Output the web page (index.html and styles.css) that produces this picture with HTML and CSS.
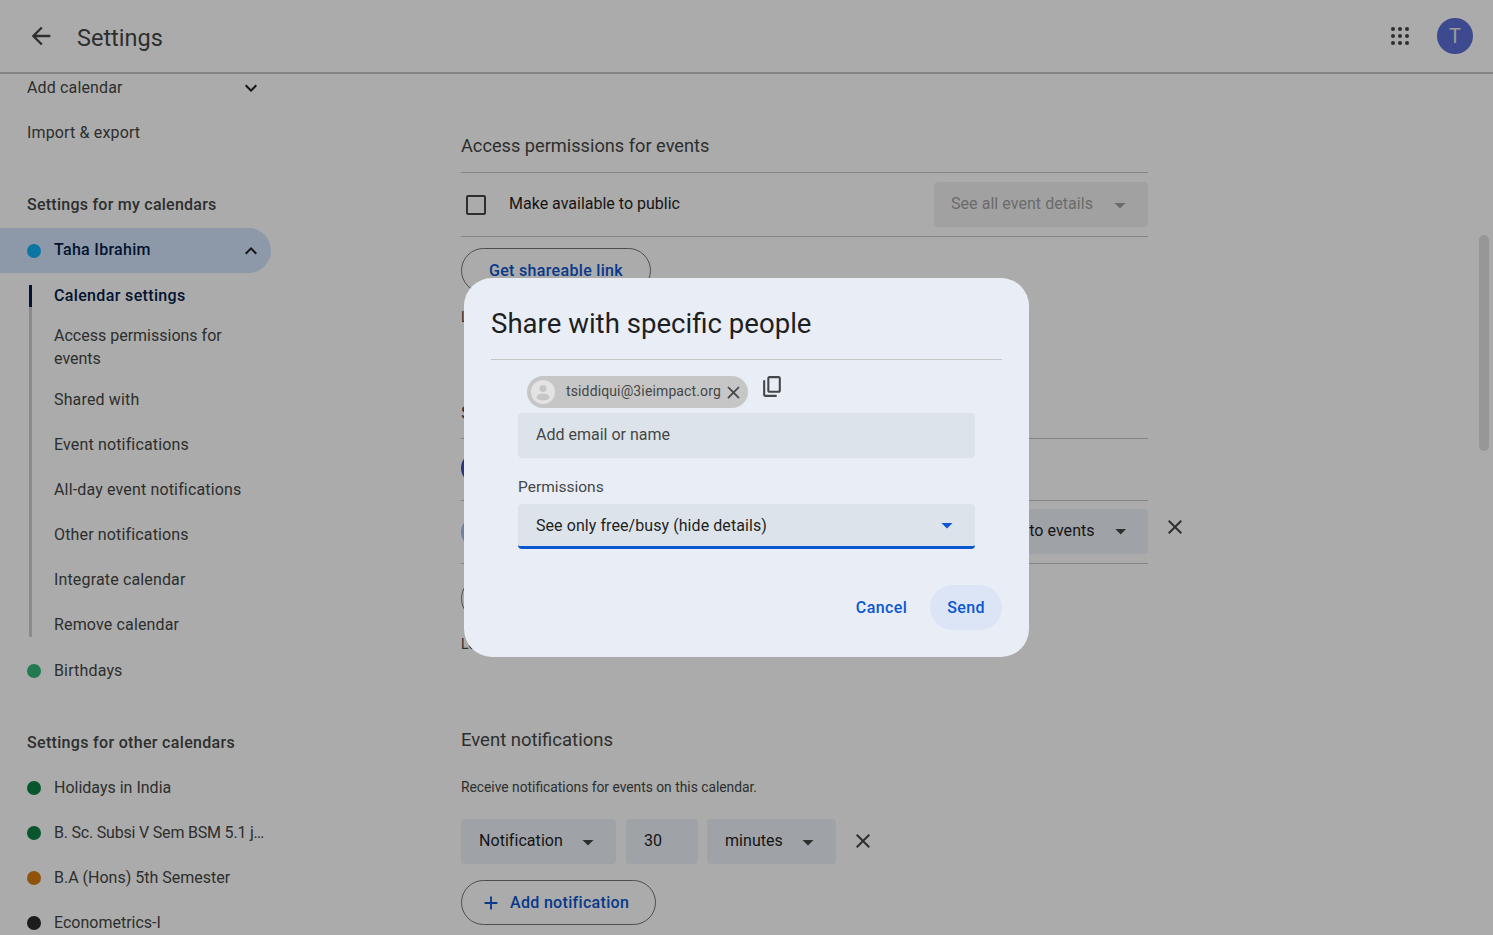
FILE: index.html
```html
<!DOCTYPE html>
<html lang="en">
<head>
    <meta charset="UTF-8">
    <meta name="viewport" content="width=device-width, initial-scale=1.0">
    <title>Settings</title>
    <link rel="stylesheet" href="styles.css">
</head>
<body>
    <svg class="icon-defs" aria-hidden="true">
        <symbol id="i-close" viewBox="0 0 24 24"><path d="M19 6.41 17.59 5 12 10.59 6.41 5 5 6.41 10.59 12 5 17.59 6.41 19 12 13.41 17.59 19 19 17.59 13.41 12z"/></symbol>
        <symbol id="i-down" viewBox="0 0 24 24"><path d="M7.41 8.59 12 13.17l4.59-4.58L18 10l-6 6-6-6z"/></symbol>
        <symbol id="i-up" viewBox="0 0 24 24"><path d="M7.41 15.41 12 10.83l4.59 4.58L18 14l-6-6-6 6z"/></symbol>
        <symbol id="i-caret" viewBox="0 0 24 24"><path d="M6.5 10h11L12 15.5z"/></symbol>
    </svg>

    <header class="topbar">
        <svg class="back-icon" viewBox="0 0 24 24"><path d="M20 11H7.83l5.59-5.59L12 4l-8 8 8 8 1.41-1.41L7.83 13H20v-2z"/></svg>
        <h1 class="topbar-title">Settings</h1>
        <svg class="apps-icon" viewBox="0 0 20 20">
            <circle cx="3" cy="3" r="2"/><circle cx="10" cy="3" r="2"/><circle cx="17" cy="3" r="2"/>
            <circle cx="3" cy="10" r="2"/><circle cx="10" cy="10" r="2"/><circle cx="17" cy="10" r="2"/>
            <circle cx="3" cy="17" r="2"/><circle cx="10" cy="17" r="2"/><circle cx="17" cy="17" r="2"/>
        </svg>
        <div class="avatar">T</div>
    </header>

    <div class="page">
        <nav class="sidebar">
            <div class="nav-row">Add calendar <svg class="chevron"><use href="#i-down"/></svg></div>
            <div class="nav-row">Import &amp; export</div>

            <h3 class="nav-heading">Settings for my calendars</h3>
            <div class="nav-row cal-row selected">
                <span class="dot dot-blue"></span>Taha Ibrahim
                <svg class="chevron"><use href="#i-up"/></svg>
            </div>
            <ul class="subnav">
                <li class="subnav-item active">Calendar settings</li>
                <li class="subnav-item tall">Access permissions for events</li>
                <li class="subnav-item">Shared with</li>
                <li class="subnav-item">Event notifications</li>
                <li class="subnav-item">All-day event notifications</li>
                <li class="subnav-item">Other notifications</li>
                <li class="subnav-item">Integrate calendar</li>
                <li class="subnav-item">Remove calendar</li>
            </ul>
            <div class="nav-row cal-row"><span class="dot dot-green"></span>Birthdays</div>

            <h3 class="nav-heading other">Settings for other calendars</h3>
            <div class="other-list">
                <div class="nav-row cal-row"><span class="dot dot-dark-green"></span>Holidays in India</div>
                <div class="nav-row cal-row tight"><span class="dot dot-dark-green"></span>B. Sc. Subsi V Sem BSM 5.1 j…</div>
                <div class="nav-row cal-row"><span class="dot dot-orange"></span>B.A (Hons) 5th Semester</div>
                <div class="nav-row cal-row"><span class="dot dot-black"></span>Econometrics-I</div>
            </div>
        </nav>

        <main class="content">
            <h2 class="section-title first">Access permissions for events</h2>
            <div class="setting-row">
                <span class="checkbox"></span>
                <span class="setting-label">Make available to public</span>
                <div class="select disabled wide">See all event details <svg class="caret"><use href="#i-caret"/></svg></div>
            </div>
            <button class="outline-btn share-btn">Get shareable link</button>
            <p class="help-text share-help">Learn how to share your calendar with others</p>

            <h2 class="section-title shared-title">Share with specific people or groups</h2>
            <div class="setting-row person-row owner">
                <span class="person-dot"></span>
                <span class="setting-label">Taha Ibrahim</span>
            </div>
            <div class="setting-row person-row">
                <span class="person-dot light"></span>
                <span class="setting-label">tsiddiqui@3ieimpact.org</span>
                <div class="select person-select">Make changes to events <svg class="caret"><use href="#i-caret"/></svg></div>
                <svg class="row-close outside"><use href="#i-close"/></svg>
            </div>
            <button class="outline-btn people-btn">Add people and groups</button>
            <p class="help-text people-help">Learn more about sharing your calendar</p>

            <h2 class="section-title notif-title">Event notifications</h2>
            <p class="help-text notif-help">Receive notifications for events on this calendar.</p>
            <div class="notif-row">
                <div class="select notif-type">Notification <svg class="caret"><use href="#i-caret"/></svg></div>
                <div class="select notif-num">30</div>
                <div class="select notif-unit">minutes <svg class="caret"><use href="#i-caret"/></svg></div>
                <svg class="row-close"><use href="#i-close"/></svg>
            </div>
            <button class="outline-btn add-btn">
                <svg class="add-icon" viewBox="0 0 24 24"><path d="M19 13h-6v6h-2v-6H5v-2h6V5h2v6h6v2z"/></svg>
                Add notification
            </button>
        </main>
    </div>

    <div class="scrollbar-thumb"></div>

    <div class="scrim">
        <div class="dialog">
            <h2 class="dialog-title">Share with specific people</h2>
            <div class="dialog-body">
                <div class="chip-row">
                    <div class="chip">
                        <span class="chip-avatar">
                            <svg viewBox="0 0 24 24"><circle cx="12" cy="8.5" r="3.6"/><ellipse cx="12" cy="17" rx="6.5" ry="3.6"/></svg>
                        </span>
                        <span class="chip-text">tsiddiqui@3ieimpact.org</span>
                        <svg class="chip-close"><use href="#i-close"/></svg>
                    </div>
                    <svg class="copy-icon" viewBox="0 0 24 24"><path d="M9 18c-.55 0-1.02-.2-1.41-.59C7.2 17.02 7 16.55 7 16V4c0-.55.2-1.02.59-1.41C7.98 2.2 8.45 2 9 2h9c.55 0 1.02.2 1.41.59.39.39.59.86.59 1.41v12c0 .55-.2 1.02-.59 1.41-.39.39-.86.59-1.41.59H9zm0-2h9V4H9v12zm-4 6c-.55 0-1.02-.2-1.41-.59C3.2 21.02 3 20.55 3 20V6h2v14h11v2H5z"/></svg>
                </div>
                <div class="field">Add email or name</div>
                <div class="field-label">Permissions</div>
                <div class="field field-select">
                    See only free/busy (hide details)
                    <svg class="caret"><use href="#i-caret"/></svg>
                </div>
            </div>
            <div class="dialog-actions">
                <button class="text-btn">Cancel</button>
                <button class="text-btn send">Send</button>
            </div>
        </div>
    </div>
</body>
</html>
```

FILE: styles.css
```css
* {
    margin: 0;
    padding: 0;
    box-sizing: border-box;
}

html, body {
    height: 100%;
    overflow: hidden;
}

body {
    font-family: Roboto, "Noto Sans", Arial, sans-serif;
    font-size: 16px;
    color: #1f1f1f;
    background-color: #ffffff;
}

button {
    font: inherit;
    background: none;
    border: none;
}

.icon-defs {
    display: none;
}

/* Top bar */
.topbar {
    display: flex;
    align-items: center;
    height: 74px;
    padding: 0 20px 0 27px;
    border-bottom: 2px solid #c4c4c4;
    background-color: #ffffff;
    position: relative;
    z-index: 1;
}

.back-icon {
    width: 28px;
    height: 28px;
    fill: #444746;
}

.topbar-title {
    margin-left: 22px;
    margin-top: 3px;
    font-size: 23.5px;
    font-weight: 400;
    color: #444746;
    flex: 1;
}

.apps-icon {
    width: 20px;
    height: 20px;
    margin-right: 27px;
    fill: #444746;
}

.avatar {
    width: 36px;
    height: 36px;
    border-radius: 50%;
    background-color: #5b6fd6;
    color: #e8e8e8;
    font-size: 20px;
    display: flex;
    align-items: center;
    justify-content: center;
}

/* Layout */
.page {
    display: grid;
    grid-template-columns: 461px 687px;
    height: 861px;
    overflow: hidden;
}

/* Sidebar */
.sidebar {
    width: 271px;
    margin-top: -9px;
    color: #444746;
    letter-spacing: 0.15px;
}

.nav-row {
    display: flex;
    align-items: center;
    height: 45px;
    padding-left: 27px;
    position: relative;
    white-space: nowrap;
}

.nav-heading {
    font-size: 16px;
    font-weight: 500;
    letter-spacing: 0.25px;
    color: #444746;
    height: 27px;
    line-height: 27px;
    padding-left: 27px;
    margin-top: 36px;
    margin-bottom: 10px;
}

.nav-heading.other {
    margin-bottom: 9px;
    letter-spacing: 0.32px;
}

.other-list {
    letter-spacing: 0;
}

.cal-row.tight {
    letter-spacing: -0.2px;
}

.cal-row.selected {
    background-color: #d3e3fd;
    border-radius: 0 23px 23px 0;
    color: #041e49;
    font-weight: 500;
    letter-spacing: 0.3px;
    padding-bottom: 2px;
}

.chevron {
    position: absolute;
    right: 8px;
    top: 11px;
    width: 24px;
    height: 24px;
    fill: #1f1f1f;
}

.dot {
    width: 14px;
    height: 14px;
    border-radius: 50%;
    margin-right: 13px;
    flex-shrink: 0;
}

.selected .dot {
    margin-top: 2px;
}

.dot-blue { background-color: #0fb0f0; }
.dot-green { background-color: #33b679; }
.dot-dark-green { background-color: #0b8043; }
.dot-orange { background-color: #d67c12; }
.dot-black { background-color: #2a2a2a; }

.subnav {
    list-style: none;
    margin-left: 29px;
    padding-top: 12px;
    padding-bottom: 1px;
    position: relative;
}

.subnav::before {
    content: "";
    position: absolute;
    left: 0;
    top: 12px;
    bottom: 11px;
    width: 3px;
    background-color: #cfcfcf;
}

.subnav-item {
    display: flex;
    align-items: center;
    height: 45px;
    padding-left: 25px;
    line-height: 23px;
    white-space: nowrap;
}

.subnav-item.tall {
    height: 59px;
    width: 200px;
    padding-bottom: 2px;
    white-space: normal;
    letter-spacing: 0;
}

.subnav-item:first-child {
    margin-top: -12px;
}

.subnav-item.active {
    color: #041e49;
    font-weight: 500;
    letter-spacing: 0.35px;
    position: relative;
}

.subnav-item.active::before {
    content: "";
    position: absolute;
    left: 0;
    top: 12px;
    height: 22px;
    width: 3px;
    background-color: #041e49;
}

/* Main content */
.content {
    color: #1f1f1f;
}

.section-title {
    font-size: 18.2px;
    font-weight: 400;
    line-height: 26px;
    color: #444746;
}

.section-title.first {
    padding-top: 59px;
    padding-bottom: 13px;
    border-bottom: 1px solid #c4c7c5;
}

.setting-row {
    display: flex;
    align-items: center;
    height: 64px;
    border-bottom: 1px solid #c4c7c5;
}

.checkbox {
    width: 20px;
    height: 20px;
    margin-left: 5px;
    margin-right: 23px;
    border: 2px solid #444746;
    border-radius: 2px;
}

.setting-label {
    flex: 1;
    padding-bottom: 2px;
}

.select {
    display: flex;
    align-items: center;
    justify-content: space-between;
    height: 45px;
    padding: 0 16px 2px 17px;
    border-radius: 4px;
    background-color: #edf2fa;
    letter-spacing: 0.05px;
    white-space: nowrap;
}

.select.wide {
    width: 214px;
}

.select.disabled {
    background-color: #f0f1f2;
    color: #a0a0a0;
}

.select.disabled .caret {
    fill: #a0a0a0;
}

.caret {
    width: 24px;
    height: 24px;
    margin-top: 2px;
    fill: #444746;
}

.outline-btn {
    display: flex;
    align-items: center;
    height: 45px;
    border: 1px solid #747775;
    border-radius: 23px;
    color: #0b57d0;
    font-weight: 500;
    letter-spacing: 0.32px;
}

.share-btn {
    width: 190px;
    margin-top: 11px;
    padding-left: 27px;
}

.help-text {
    font-size: 13.8px;
    color: #444746;
    line-height: 20px;
}

.share-help {
    margin-top: 14px;
}

.shared-title {
    margin-top: 73px;
    padding-bottom: 12px;
    border-bottom: 1px solid #c4c7c5;
}

.person-row {
    height: 63px;
    position: relative;
}

.person-row.owner {
    height: 62px;
    padding-bottom: 4px;
}

.person-dot {
    width: 32px;
    height: 32px;
    border-radius: 50%;
    background-color: #3f51b5;
    margin-right: 16px;
}

.person-dot.light {
    background-color: #a8c0ee;
}

.person-select {
    width: 244px;
    margin-top: -2px;
    padding-right: 16px;
    gap: 14px;
    justify-content: flex-end;
}

.row-close {
    width: 24px;
    height: 24px;
    fill: #444746;
}

.row-close.outside {
    position: absolute;
    right: -39px;
    top: 14px;
}

.people-btn {
    width: 220px;
    margin-top: 12px;
    padding-left: 27px;
}

.people-help {
    margin-top: 13px;
}

.section-title.notif-title {
    margin-top: 73px;
    font-size: 18.5px;
}

.notif-help {
    margin-top: 24px;
}

.notif-row {
    display: flex;
    align-items: center;
    gap: 10px;
    margin-top: 22px;
}

.notif-type {
    width: 155px;
    padding-left: 18px;
}

.notif-num {
    width: 72px;
    padding-left: 18px;
}

.notif-unit {
    width: 129px;
    margin-left: -1px;
    padding-left: 18px;
}

.notif-row .row-close {
    margin-left: 5px;
    margin-top: -2px;
}

.add-btn {
    width: 195px;
    margin-top: 16px;
    padding-left: 18px;
    gap: 8px;
}

.add-icon {
    width: 22px;
    height: 22px;
    fill: #0b57d0;
}

/* Fake scrollbar of the main pane */
.scrollbar-thumb {
    position: absolute;
    left: 1479px;
    top: 235px;
    width: 10px;
    height: 216px;
    border-radius: 5px;
    background-color: #e2e2e2;
}

/* Dialog */
.scrim {
    position: fixed;
    inset: 0;
    z-index: 2;
    display: flex;
    align-items: center;
    justify-content: center;
    background-color: rgba(0, 0, 0, 0.33);
}

.dialog {
    width: 565px;
    height: 379px;
    padding: 0 27px;
    border-radius: 28px;
    background-color: #e9eef6;
}

.dialog-title {
    height: 82px;
    padding-top: 28px;
    font-size: 27.6px;
    font-weight: 400;
    line-height: 36px;
    border-bottom: 1px solid #c4c7c5;
}

.dialog-body {
    padding: 16px 27px 0;
}

.chip-row {
    display: flex;
    align-items: flex-start;
    padding-left: 9px;
}

.chip {
    display: flex;
    align-items: center;
    width: 221px;
    height: 32px;
    padding: 0 4px 0 4px;
    border-radius: 16px;
    background-color: #c6c6c6;
}

.chip-avatar {
    width: 24px;
    height: 24px;
    border-radius: 50%;
    background-color: #e3e3e3;
    margin-right: 11px;
}

.chip-avatar svg {
    display: block;
    fill: #c6c6c6;
}

.chip-text {
    flex: 1;
    font-size: 14px;
    letter-spacing: 0.13px;
    color: #444746;
    white-space: nowrap;
    padding-bottom: 2px;
}

.chip-close {
    width: 21px;
    height: 21px;
    fill: #444746;
}

.copy-icon {
    width: 25px;
    height: 25px;
    margin-left: 12px;
    margin-top: -2px;
    fill: #444746;
}

.field {
    display: flex;
    align-items: center;
    height: 45px;
    margin-top: 5px;
    padding: 0 16px 2px 18px;
    border-radius: 4px;
    background-color: #dde3ea;
    color: #444746;
}

.field-label {
    margin-top: 19px;
    font-size: 15.5px;
    line-height: 20px;
    color: #444746;
}

.field-select {
    justify-content: space-between;
    margin-top: 7px;
    color: #1f1f1f;
    letter-spacing: 0.07px;
    border-bottom: 3px solid #0b57d0;
    padding-top: 1px;
    padding-bottom: 0;
}

.field-select .caret {
    fill: #0b57d0;
    margin-top: -2px;
}

.dialog-actions {
    display: flex;
    justify-content: flex-end;
    align-items: center;
    gap: 6px;
    margin-top: 36px;
}

.text-btn {
    height: 45px;
    padding: 0 17px;
    border-radius: 23px;
    color: #0b57d0;
    font-weight: 500;
    letter-spacing: 0.4px;
}

.text-btn.send {
    background-color: #dce5f6;
}
```
